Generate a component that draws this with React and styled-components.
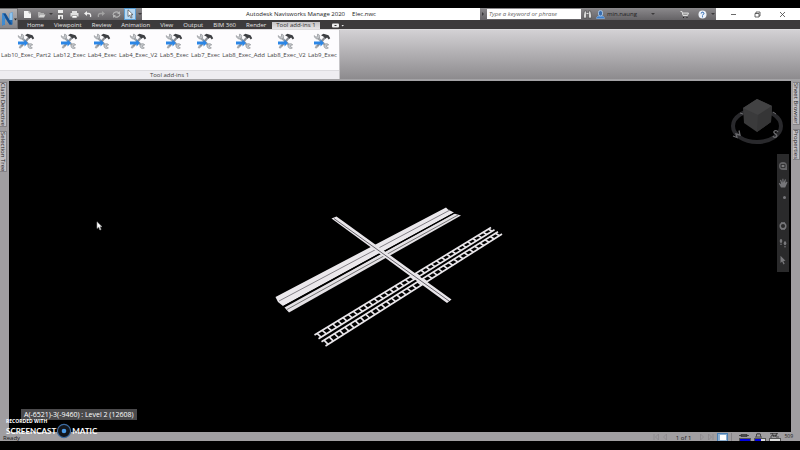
import React, {useState} from 'react'
import styled, {createGlobalStyle, css} from 'styled-components'


const TABS = ['Home', 'Viewpoint', 'Review', 'Animation', 'View', 'Output', 'BIM 360', 'Render', 'Tool add-ins 1']

const ADDINS = [
	'Lab10_Exec_Part2',
	'Lab12_Exec',
	'Lab4_Exec',
	'Lab4_Exec_V2',
	'Lab5_Exec',
	'Lab7_Exec',
	'Lab8_Exec_Add',
	'Lab8_Exec_V2',
	'Lab9_Exec'
]

const METERS = [
	{name: 'Pencil', fill: 100, path: 'M2 1.500h6v2H2zM0 2.500h10'},
	{name: 'Disk', fill: 52, path: 'M1 4h7M2.500 3.500V1h4v2.500M3 0h3'},
	{name: 'Web', fill: 0, path: 'M1 .7h8M2 2.700h6M3 0l2 4M8 0L6 4M1 4h2M7 4h3'}
]

/*
 * ICONS
 */

const ToolsIcon = () => (
	<svg width='18' height='17' viewBox='0 0 18 17' aria-hidden='true'>
		<path d='M4 4l9 9' stroke='#a0a4a9' strokeWidth='2.4'/>
		<path d='M1.200 2.600L3 4.200l1.600-1L4.400 1.200C6.400 1 7.200 3 6.300 5 5 6.800 1.500 6 1.200 2.600z' fill='#c4c7cb' stroke='#83878c' strokeWidth='.6'/>
		<path d='M11 12.500c.4-2 3.400-2.600 4.800-.6l-2 .4-.2 1.600 1.800 1C13.500 16.500 10.700 15 11 12.500z' fill='#c4c7cb' stroke='#83878c' strokeWidth='.6'/>
		<path d='M12 4.500L4 13.500' stroke='#8d9095' strokeWidth='2.200'/>
		<path d='M8 2.300L10.500.8l5 1.400 1.700 3-1.500 1.300-1.600-2-1.600 1.200-1.800-2z' fill='#3d3f43'/>
		<path d='M1 8.400h6.500V6.600l3.500 3.400-3.500 3.400v-1.800H1z' fill='#2b86e6'/>
		<path d='M3 12l2 2-1.500 1.600-1.800-.6z' fill='#a5a9ae'/>
	</svg>
)

const LogoIcon = () => (
	<svg width='17' height='18' viewBox='0 0 17 18' aria-hidden='true'>
		<path d='M2 3.500h3.500L9.500 10V3.500L12.500 2v12.500H9.500L5 8v6.500l-3 1z' fill='#1e6cb8'/>
		<path d='M2 3.500h3v11l-3 1z' fill='#3f8bd0'/>
		<path d='M9.500 3.500l3-1.500v8h-3z' fill='#8cc3ee'/>
		<path d='M3 3.500h2.500l6.500 11H9.500z' fill='#154f8f'/>
		<path d='M14 8.500h3l-1.500 2z' fill='#222'/>
	</svg>
)

const NewIcon = () => (
	<svg width='9' height='9' viewBox='0 0 9 9' aria-hidden='true'>
		<path d='M1 1h5l2 2v5H1z' fill='#f3f3f3'/><path d='M6 1v2h2' stroke='#888' strokeWidth='.7' fill='none'/>
	</svg>
)

const OpenIcon = () => (
	<svg width='9' height='9' viewBox='0 0 9 9' aria-hidden='true'>
		<path d='M1 7.500V2h2l1 1h3v1.500H3z' fill='#b0b0b0'/><path d='M1.300 7.500L3 4.500h5.500L7 7.500z' fill='#d4d4d4'/>
	</svg>
)

const SaveIcon = () => (
	<svg width='9' height='9' viewBox='0 0 9 9' aria-hidden='true'>
		<path d='M2 0h5v9H2z' fill='#eee'/><path d='M2 4h5' stroke='#444' strokeWidth='1.400' fill='none'/><path d='M4 6.500h1.500V9H4z' fill='#555'/>
	</svg>
)

const PrintIcon = () => (
	<svg width='9' height='9' viewBox='0 0 9 9' aria-hidden='true'>
		<path d='M2 1h5v2H2zM.5 3h8v3.500h-8z' fill='#e0e0e0'/><path d='M2 5.500h5V8H2z' fill='#fff' stroke='#777' strokeWidth='.6'/>
	</svg>
)

const ArrowIcon = ({flip}) => (
	<svg width='9' height='9' viewBox='0 0 9 9' aria-hidden='true'>
		<g transform={flip ? 'matrix(-1 0 0 1 9 0)' : undefined}>
			<path d='M4 1L1 3.500 4 6z' fill={flip ? '#a2a2a2' : '#eee'}/>
			<path d='M3 3.500h2.500c2 0 2.500 1.500 2 3.500' stroke={flip ? '#a2a2a2' : '#eee'} strokeWidth='1.300' fill='none'/>
		</g>
	</svg>
)

const RefreshIcon = () => (
	<svg width='9' height='9' viewBox='0 0 9 9' aria-hidden='true'>
		<path d='M1 5c0-3 4-4 6-2M8 4c0 3-4 4-6 2' stroke='#b4b4b4' strokeWidth='1.100' fill='none'/>
		<path d='M8 1v3H5zM1 8V5h3z' fill='#b4b4b4'/>
	</svg>
)

const PointerIcon = ({fill = '#fff', stroke = '#333'}) => (
	<svg width='7' height='10' viewBox='0 0 7 10' aria-hidden='true'>
		<path d='M1 .8v6.700l1.700-1.400L3.900 9l1.200-.5L3.900 5.700H6z' fill={fill} stroke={stroke} strokeWidth='.6'/>
	</svg>
)

const BinocularsIcon = () => (
	<svg width='9' height='9' viewBox='0 0 9 9' aria-hidden='true'>
		<path d='M.5 5l1-4h2v7h-3zM8.500 5l-1-4h-2v7h3z' fill='#d8d8d8' stroke='#444' strokeWidth='.6'/><path d='M3.500 3.500h2' stroke='#ddd'/>
	</svg>
)

const UserIcon = () => (
	<svg width='9' height='9' viewBox='0 0 9 9' aria-hidden='true'>
		<path d='M.5 8.500c0-2 1.500-2.500 4-2.500s4 .5 4 2.500z' fill='#3c7fd0' stroke='#9dc4ee' strokeWidth='.5'/>
		<rect x='2.500' y='.6' width='4' height='5.400' rx='1.800' fill='#3a6dae' stroke='#b9d7f5' strokeWidth='.8'/>
	</svg>
)

const CartIcon = () => (
	<svg width='9' height='9' viewBox='0 0 9 9' aria-hidden='true'>
		<path d='M.5 1.500H2L3 5.500h4.500L8.500 3H2.500' stroke='#ddd' fill='#999'/><path d='M3 7.500h1M6.500 7.500h1' stroke='#222' strokeWidth='1.200'/>
	</svg>
)

const HelpIcon = () => (
	<svg width='9' height='9' viewBox='0 0 9 9' aria-hidden='true'>
		<circle cx='4.500' cy='4.500' r='4' fill='#eef3fa'/>
		<path d='M3.200 3.500c0-1.800 2.700-1.700 2.700 0 0 1-1.400 1-1.400 2M4.500 6.300v1' stroke='#1b5cad' strokeWidth='1' fill='none'/>
	</svg>
)

const WindowIcon = ({kind}) => (
	<svg width='7' height='7' viewBox='0 0 7 7' aria-hidden='true' fill='none' stroke='#444' strokeWidth='.8'>
		{kind === 'Minimize' && <path d='M1 3.500h5'/>}
		{kind === 'Restore' && <path d='M1 2.500h4V6H1zM2 2.500V1h4v4H5'/>}
		{kind === 'Close' && <path d='M1 1l5 5M6 1L1 6'/>}
	</svg>
)

const Logotype = () => (
	<svg width='16' height='16' viewBox='0 0 16 16' aria-hidden='true'>
		<circle cx='8' cy='8' r='6.600' fill='#12161c' stroke='#3c6ba0' strokeWidth='1.200'/>
		<circle cx='8' cy='8' r='2.300' fill='#4b9be8'/>
	</svg>
)

const ViewCube = () => (
	<svg width='54' height='48' viewBox='0 0 54 48' role='img' aria-label='View cube'>
		<ellipse cx='27' cy='28' rx='24' ry='16' fill='none' stroke='#29292c' strokeWidth='4'/>
		<path d='M13 10L27 1l15 7-1 16-14 10-13-9z' fill='#3a3a3b'/>
		<path d='M13 10L27 1l15 7-14 9z' fill='#424243'/>
		<path d='M28 17l-1 17 14-10 1-16z' fill='#353536'/>
		<g fill='none' stroke='#6a6a6d' strokeWidth='1.300'>
			<path d='M3 38l4 1.500L6 36l4 1-1-4.500M43 38c1 2.500 5 1 3.500-1S43 35 44 33.500s3-1 4 .5'/>
			<path d='M10 15l3 1M43 14l3 2' strokeWidth='1'/>
		</g>
	</svg>
)

const NAV_ICONS = {
	'Steering wheel': <><path d='M1 5a4 4 0 0 1 8 0v4H5a4 4 0 0 1-4-4z' fill='#636365'/><path d='M3 3.500h4v3H3z' fill='none' stroke='#2a2a2b' strokeWidth='.8'/><circle cx='5' cy='5' r='.9' fill='#888'/></>,
	'Pan': <path d='M3 9.500L.8 5.500l.8-.5L3.200 6.200 2 2l1-.3 1.300 3L4.400.8h1l.3 3.700L7 1.200l.9.3L7.200 5l1.500-1.500.8.7L7.200 9.500z' fill='#77777a'/>,
	'Zoom': <circle cx='6.500' cy='2.500' r='1.500' fill='#77777a'/>,
	'Orbit': <><circle cx='5' cy='5' r='2.800' fill='none' stroke='#77777a' strokeWidth='1.500'/><path d='M3 1.500h4M3 8.500h4' stroke='#66666a'/></>,
	'Walk': <g fill='#77777a'><ellipse cx='3' cy='3' rx='1.300' ry='2'/><circle cx='3' cy='6.300' r='.8'/><ellipse cx='7' cy='5.300' rx='1.300' ry='2'/><circle cx='7' cy='8.700' r='.8'/></g>,
	'Select': <path d='M2.500.8l5 5-2.200.2 1.400 2.800-1.200.6-1.400-2.900L2.500 8z' fill='#77777a'/>
}

const PAGE_ICONS = {
	'First sheet': 'M1 1v6M5.500 1L2.500 4l3 3z',
	'Previous sheet': 'M4.500 1l-3 3 3 3z',
	'Next sheet': 'M1.500 1l3 3-3 3z',
	'Last sheet': 'M.5 1l3 3-3 3zM5 1v6'
}

/*
 * CABLE TRAYS DRAWN IN THE VIEWPORT
 */

const RUNGS = Array.from({length: 34}, (_, i) => (i + .5) / 34)

const Ladder = ({top, bottom}) => (
	<g stroke='#e9e6ea'>
		{RUNGS.map(t => (
			<line
				key={t}
				x1={top[0] + (top[2] - top[0]) * t}
				y1={top[1] + (top[3] - top[1]) * t}
				x2={bottom[0] + (bottom[2] - bottom[0]) * t}
				y2={bottom[1] + (bottom[3] - bottom[1]) * t}
				strokeWidth='1.700'
			/>
		))}
		<line x1={top[0]} y1={top[1]} x2={top[2]} y2={top[3]} strokeWidth='1.700'/>
		<line x1={bottom[0]} y1={bottom[1]} x2={bottom[2]} y2={bottom[3]} strokeWidth='1.700'/>
	</g>
)

const Trays = () => (
	<Scene viewBox='9 81 782 351' role='img' aria-label='Cable tray model'>
		<polygon points='275.500,297 446,207.500 448,209.500 454,212.500 283,306 278,302' fill='#ebe8ec'/>
		<path d='M279 301L450 210' stroke='#77747a' strokeWidth='.9'/>
		<polygon points='284.500,307.500 454,213.500 461,215.500 289,312.500' fill='#e4e1e5'/>
		<path d='M287 309.500L458 215' stroke='#666' strokeWidth='.9'/>
		<path d='M283.500 306.500L455 212.700' stroke='#000' strokeWidth='1.300'/>
		<Ladder top={[314.5, 335, 491, 227.5]} bottom={[318.5, 338.7, 494.5, 229.7]}/>
		<Ladder top={[321.5, 341.7, 498, 231.7]} bottom={[325.5, 346, 502, 234]}/>
		<polygon points='331.500,218.500 336.500,216.500 451.500,299.500 447,303' fill='#e9e6ea'/>
		<path d='M334 218.500L449 301' stroke='#66636a' strokeWidth='1'/>
	</Scene>
)


const PageButton = ({name}) => (
	<PlainButton disabled aria-label={name}>
		<svg width='6' height='8' viewBox='0 0 6 8' aria-hidden='true'>
			<path d={PAGE_ICONS[name]} fill='none' stroke='#8b898d' strokeWidth='.8'/>
		</svg>
	</PlainButton>
)


const App = () => {
	const [tab, setTab] = useState('Tool add-ins 1')

	return (
		<>
			<GlobalStyle/>
			<Screen>
				<Header>
					<AppButton aria-label='Application menu'><LogoIcon/></AppButton>
					<TitleBar>
						<QuickAccess>
							<IconButton aria-label='New'><NewIcon/></IconButton>
							<IconButton aria-label='Open'><OpenIcon/></IconButton>
							<Caret/>
							<IconButton aria-label='Save'><SaveIcon/></IconButton>
							<IconButton aria-label='Print'><PrintIcon/></IconButton>
							<IconButton aria-label='Undo'><ArrowIcon/></IconButton>
							<IconButton aria-label='Redo'><ArrowIcon flip/></IconButton>
							<Gap/>
							<IconButton aria-label='Refresh'><RefreshIcon/></IconButton>
							<IconButton aria-label='Select' $pressed><PointerIcon/></IconButton>
							<Caret/>
						</QuickAccess>
						<Title>
							<span>Autodesk Navisworks Manage 2020</span>
							<span>Elec.nwc</span>
						</Title>
						<InfoCenter>
							<Caret $side/>
							<Search type='text' aria-label='Search' placeholder='Type a keyword or phrase'/>
							<IconButton aria-label='Find'><BinocularsIcon/></IconButton>
							<Account><UserIcon/><span>min.naung</span><Caret/></Account>
							<IconButton aria-label='Store'><CartIcon/></IconButton>
							<HelpMenu aria-label='Help'><HelpIcon/><Caret/></HelpMenu>
						</InfoCenter>
						<WindowButtons>
							{['Minimize', 'Restore', 'Close'].map(kind => (
								<IconButton key={kind} aria-label={kind}><WindowIcon kind={kind}/></IconButton>
							))}
						</WindowButtons>
					</TitleBar>
					<TabBar>
						{TABS.map(name => (
							<Tab key={name} $active={tab === name} onClick={() => setTab(name)}>{name}</Tab>
						))}
						<RibbonToggle aria-label='Ribbon display'>
							<svg width='12' height='5' viewBox='0 0 12 5' aria-hidden='true'>
								<rect width='7' height='4' y='.5' rx='1' fill='#eee'/><path d='M2.500 2h2v1h-2z' fill='#333'/><path d='M9.500 2h2.400l-1.200 1.500z' fill='#eee'/>
							</svg>
						</RibbonToggle>
					</TabBar>
				</Header>

				<Ribbon>
					<Panel>
						<Addins>
							{ADDINS.map(name => (
								<Addin key={name}><ToolsIcon/>{name}</Addin>
							))}
						</Addins>
						<PanelTitle>Tool add-ins 1</PanelTitle>
					</Panel>
				</Ribbon>

				<Workspace>
					<Dock>
						<DockTab>Clash Detective</DockTab>
						<DockTab>Selection Tree</DockTab>
					</Dock>
					<Viewport>
						<Trays/>
						<CubeHolder><ViewCube/></CubeHolder>
						<NavBar>
							{Object.keys(NAV_ICONS).map(name => (
								<NavButton key={name} aria-label={name} $last={name === 'Zoom'}>
									<svg width='10' height='10' viewBox='0 0 10 10' aria-hidden='true'>{NAV_ICONS[name]}</svg>
								</NavButton>
							))}
						</NavBar>
						<Cursor><PointerIcon fill='#fff' stroke='#999'/></Cursor>
						<GridLabel>A(-6521)-3(-9460) : Level 2 (12608)</GridLabel>
					</Viewport>
					<Dock $right>
						<DockTab>Sheet Browser</DockTab>
						<DockTab>Properties</DockTab>
					</Dock>
				</Workspace>

				<StatusBar>
					<span>Ready</span>
					<Pager>
						<PageButton name='First sheet'/>
						<PageButton name='Previous sheet'/>
						<PageCount>1 of 1</PageCount>
						<PageButton name='Next sheet'/>
						<PageButton name='Last sheet'/>
						<PlainButton aria-label='Sheet browser'>
							<svg width='11' height='8' viewBox='0 0 11 8' aria-hidden='true'>
								<rect x='.5' y='.5' width='10' height='8' fill='#8fb0d0' stroke='#4a80b5'/><path d='M3 2h6v5H3z' fill='#fff'/>
							</svg>
						</PlainButton>
					</Pager>
					<Meters>
						{METERS.map(({name, fill, path}) => (
							<Meter key={name} title={name}>
								<svg width='11' height='5' viewBox='0 0 11 5' aria-hidden='true'><path d={path} fill='none' stroke='#222' strokeWidth='.7'/></svg>
								<Bar><BarFill style={{width: `${fill}%`}}/></Bar>
							</Meter>
						))}
						<Memory>509</Memory>
					</Meters>
				</StatusBar>

				{/* Recorder watermark */}
				<Watermark>
					<small>RECORDED WITH</small>
					<Brand>SCREENCAST<Logotype/>MATIC</Brand>
				</Watermark>
			</Screen>
		</>
	)
}

export default App


const GlobalStyle = createGlobalStyle`
	* {
		box-sizing: border-box;
	}
	body {
		margin: 0;
		background: #000;
		font: 6px/8px 'Open Sans', 'Noto Sans', sans-serif;
		color: #222;
	}
	button, input {
		font: inherit;
		color: inherit;
		border: 0;
		padding: 0;
		margin: 0;
		background: none;
	}
	svg {
		display: block;
		flex: none;
	}
`

const Screen = styled.div`
	position: relative;
	display: flex;
	flex-direction: column;
	height: 100vh;
	padding: 8px 0 9px;
	overflow: hidden;
`

const Header = styled.header`
	display: grid;
	grid-template: 12px 9px / 18px 1fr;
	background: #3d3b3c;
`

const AppButton = styled.button`
	grid-row: 1 / 3;
	border: 1px solid #6d6c6e;
	border-left: 0;
	background: linear-gradient(#b2b2b4, #858487);
`

const bar = css`
	display: flex;
	align-items: center;
	background: linear-gradient(#8b898c, #656366);
`

const TitleBar = styled.div`
	display: flex;
	background: #fff;
`

const QuickAccess = styled.div`
	${bar}
	width: 124px;
	padding-left: 4px;
	gap: 2px;
`

const IconButton = styled.button`
	display: flex;
	align-items: center;
	justify-content: center;
	width: 12px;
	height: 12px;

	${({$pressed}) => $pressed && css`
		background: #b7d8f2;
		border: 1px solid #5e9fd4;
	`}
`

const Caret = styled.i`
	border: 2px solid transparent;
	border-top-color: #3c3b3c;
	border-bottom: 0;
	transform: ${({$side}) => $side ? 'rotate(-90deg)' : 'none'};
`

const Gap = styled.span`
	flex: 1;
`

const Title = styled.div`
	flex: 1;
	display: flex;
	align-items: center;
	justify-content: center;
	gap: 7px;
`

const InfoCenter = styled.div`
	${bar}
	width: 236px;
	padding: 0 1px;
`

const Search = styled.input`
	width: 94px;
	height: 10px;
	margin-left: 2px;
	padding: 0 2px;
	background: #fff;
	border-radius: 0;

	&::placeholder {
		color: #666;
		font-style: italic;
		opacity: 1;
	}
`

const Account = styled.button`
	flex: 1;
	display: flex;
	align-items: center;
	gap: 2px;
	padding-left: 3px;

	${Caret} {
		margin: 0 23px 0 auto;
	}
`

const HelpMenu = styled.button`
	display: flex;
	align-items: center;
	gap: 4px;
	padding-left: 8px;
`

const WindowButtons = styled.div`
	display: flex;
	justify-content: space-around;
	align-items: center;
	width: 84px;
	padding: 0 5px;
`

const TabBar = styled.nav`
	display: flex;
	padding: 2px 0 0 5px;
	gap: 2px;
`

const Tab = styled.button`
	padding: 0 4px;
	line-height: 7px;
	color: ${({$active}) => $active ? '#333' : '#e4e4e4'};
	background: ${({$active}) => $active ? 'linear-gradient(#c4c3c5, #e6e5e7)' : 'none'};
`

const RibbonToggle = styled.button`
	padding: 0 10px;
`

const Ribbon = styled.div`
	display: flex;
	height: 52px;
	border-top: 1px solid #dcdbdd;
	border-bottom: 2px solid #a3a2a5;
	background: linear-gradient(#d3d1d4, #8d8b8e);
`

const Panel = styled.section`
	display: flex;
	flex-direction: column;
	min-width: 340px;
	background: #fdfcfe;
	border-right: 1px solid #c6c5c8;
`

const Addins = styled.div`
	flex: 1;
	display: flex;
	justify-content: space-between;
	align-items: flex-start;
	padding: 3px 2px 0 1px;
`

const Addin = styled.button`
	display: flex;
	flex-direction: column;
	align-items: center;
	gap: 1px;
	color: #444;
	white-space: nowrap;
`

const PanelTitle = styled.div`
	border-top: 1px solid #dddce0;
	background: #eeedf1;
	color: #444;
	text-align: center;
`

const Workspace = styled.main`
	flex: 1;
	display: flex;
	min-height: 0;
	background: #a09ea1;
`

const Dock = styled.aside`
	display: flex;
	flex-direction: column;
	align-items: ${({$right}) => $right ? 'flex-end' : 'flex-start'};
	gap: 4px;
	width: 9px;
	padding-top: 1px;
	overflow: hidden;
`

const DockTab = styled.button`
	writing-mode: vertical-rl;
	width: 7px;
	line-height: 6px;
	white-space: nowrap;
	background: #c1bfc2;
	border: 1px solid #848286;
	border-left: 0;
	color: #222;
`

const Viewport = styled.div`
	position: relative;
	flex: 1;
	background: #000;
	overflow: hidden;
`

const Scene = styled.svg`
	width: 100%;
	height: 100%;
`

const CubeHolder = styled.div`
	position: absolute;
	top: 17px;
	right: 7px;
`

const NavBar = styled.div`
	position: absolute;
	top: 73px;
	right: 2px;
	display: flex;
	flex-direction: column;
	align-items: center;
	gap: 7px;
	width: 12px;
	padding: 7px 0;
	background: #2a2a2b;
`

const NavButton = styled.button`
	height: 10px;
	margin-bottom: ${({$last}) => $last ? '9px' : '0'};
`

const Cursor = styled.div`
	position: absolute;
	left: 87px;
	top: 140px;
`

const GridLabel = styled.div`
	position: absolute;
	left: 12px;
	bottom: 12px;
	padding: 0 3px;
	font-size: 7px;
	line-height: 11px;
	color: #fff;
	background: #4b4a4c;
`

const StatusBar = styled.footer`
	display: flex;
	align-items: flex-end;
	height: 9px;
	padding: 0 7px 0 3px;
	line-height: 6px;
	background: #a09ea1;
`

const Pager = styled.div`
	display: flex;
	align-items: flex-end;
	gap: 3px;
	margin-left: auto;
`

const PlainButton = styled.button`
	height: 8px;
`

const PageCount = styled.span`
	margin: 0 5px;
`

const Meters = styled.div`
	display: flex;
	gap: 3px;
	margin-left: 3px;
	padding-left: 7px;
	border-left: 1px solid #858387;
`

const Meter = styled.div`
	width: 12px;
`

const Bar = styled.div`
	height: 3px;
	background: #ddd;
	border: 1px solid #555;
	border-width: 1px 1px 0;
`

const BarFill = styled.div`
	height: 2px;
	background: #0000e0;
`

const Memory = styled.span`
	font-size: 5px;
`

const Watermark = styled.div`
	position: absolute;
	left: 6px;
	bottom: 13px;
	color: #fff;
	font-weight: 700;

	small {
		display: block;
		font-size: 5px;
		line-height: 6px;
	}
`

const Brand = styled.div`
	display: flex;
	align-items: center;
	height: 13px;
	font-family: Lato, sans-serif;
	font-size: 8px;
`
